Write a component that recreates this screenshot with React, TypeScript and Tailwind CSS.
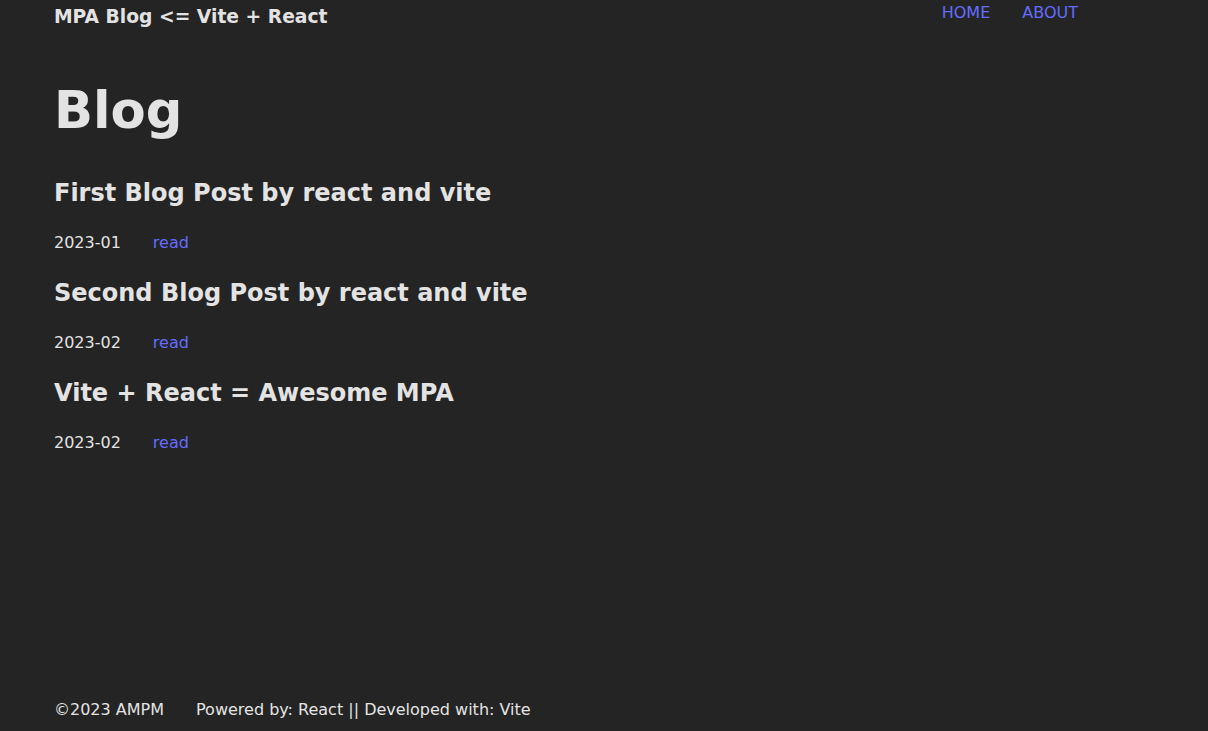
import React from 'react';

const posts = [
  { title: 'First Blog Post by react and vite', date: '2023-01' },
  { title: 'Second Blog Post by react and vite', date: '2023-02' },
  { title: 'Vite + React = Awesome MPA', date: '2023-02' },
];

export default function App() {
  return (
    <div className="min-h-screen flex flex-col bg-[#242424] text-[#e3e3e3] font-['DejaVu_Sans',sans-serif] px-[54px]">
      {/* Header */}
      <header className="flex items-start justify-between pr-[76px]">
        <h3 className="text-[18.72px] font-bold leading-[22px] mt-[6px]">MPA Blog &lt;= Vite + React</h3>
        <nav className="flex gap-8 mt-[3px]">
          <a className="text-[#646cff] text-base leading-[19px]">HOME</a>
          <a className="text-[#646cff] text-base leading-[19px]">ABOUT</a>
        </nav>
      </header>

      {/* Main */}
      <main className="flex-1 pt-[54px]">
        <h1 className="text-[51.2px] font-bold leading-[56px] mb-[41px]">Blog</h1>
        {posts.map((post) => (
          <div key={post.title}>
            <h2 className="text-2xl font-bold leading-[28px]">{post.title}</h2>
            <div className="flex gap-8 text-base leading-[20px] mt-[26px] mb-[26px]">
              <span>{post.date}</span>
              <a className="text-[#646cff]">read</a>
            </div>
          </div>
        ))}
      </main>

      {/* Footer */}
      <footer className="flex gap-8 text-base leading-[20px] pb-[11px]">
        <span>©2023 AMPM</span>
        <span>Powered by: React || Developed with: Vite</span>
      </footer>
    </div>
  );
}
